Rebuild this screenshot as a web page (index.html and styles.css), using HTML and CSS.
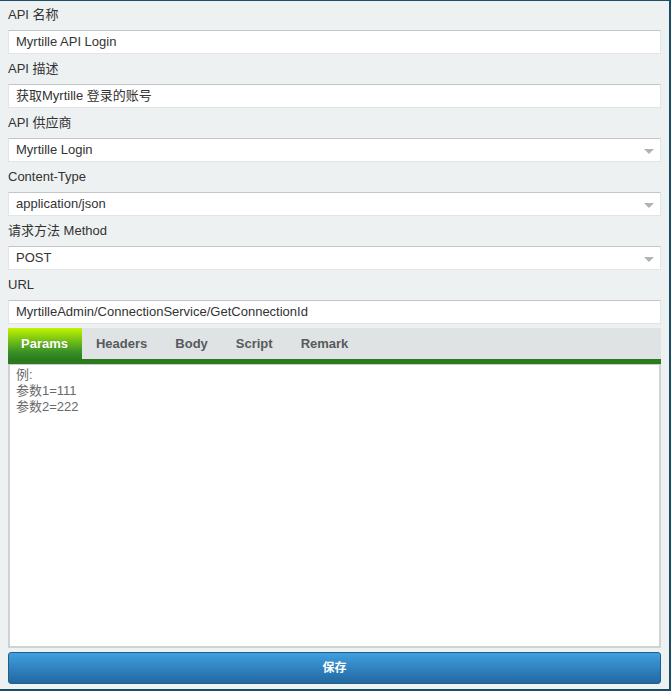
FILE: index.html
```html
<!DOCTYPE html>
<html lang="zh">
<head>
<meta charset="utf-8">
<title>API</title>
<link rel="stylesheet" href="styles.css">
</head>
<body>
<div class="page">
  <div class="field">
    <div class="label">API 名称</div>
    <div class="input">Myrtille API Login</div>
  </div>
  <div class="field">
    <div class="label">API 描述</div>
    <div class="input">获取Myrtille 登录的账号</div>
  </div>
  <div class="field">
    <div class="label">API 供应商</div>
    <div class="input select">Myrtille Login<span class="arrow"></span></div>
  </div>
  <div class="field">
    <div class="label">Content-Type</div>
    <div class="input select">application/json<span class="arrow"></span></div>
  </div>
  <div class="field">
    <div class="label">请求方法 Method</div>
    <div class="input select">POST<span class="arrow"></span></div>
  </div>
  <div class="field">
    <div class="label">URL</div>
    <div class="input">MyrtilleAdmin/ConnectionService/GetConnectionId</div>
  </div>
  <div class="tabs">
    <div class="tab active">Params</div>
    <div class="tab">Headers</div>
    <div class="tab">Body</div>
    <div class="tab">Script</div>
    <div class="tab">Remark</div>
  </div>
  <div class="textarea">例:<br>参数1=111<br>参数2=222</div>
  <div class="button">保存</div>
</div>
</body>
</html>
```
FILE: styles.css
```css
* { box-sizing: border-box; }
html, body { margin: 0; padding: 0; }
body {
  font-family: "Liberation Sans", Arial, "Noto Sans CJK SC", sans-serif;
  font-size: 13px;
  color: #333;
  background: #edf1f2;
}
.page {
  height: 691px;
  border-top: 1px solid #1b4d66;
  border-right: 2px solid #1b4d66;
  border-bottom: 2px solid #1b4d66;
  padding: 4px 8px 5px 8px;
  display: flex;
  flex-direction: column;
}
.field { display: flex; flex-direction: column; }
.field + .field { margin-top: 5px; }
.label {
  height: 20px;
  line-height: 20px;
  margin-bottom: 5px;
  color: #333;
}
.input {
  position: relative;
  height: 24px;
  line-height: 22px;
  padding: 0 7px;
  background: #fff;
  border: 1px solid #e2e4e5;
  border-top-color: #c3c5c6;
  color: #333;
  white-space: nowrap;
}
.arrow {
  position: absolute;
  right: 6px;
  top: 10px;
  width: 0;
  height: 0;
  border-left: 5px solid transparent;
  border-right: 5px solid transparent;
  border-top: 5px solid #b0b3b5;
}
.tabs {
  margin-top: 4px;
  height: 36px;
  display: flex;
  background: #dfe3e4;
  border-bottom: 5px solid #2c7a1e;
}
.tab {
  padding: 0 14px 0 13px;
  line-height: 31px;
  font-weight: bold;
  color: #575a5c;
}
.tab + .tab { padding-left: 14px; }
.tab.active {
  color: #fff;
  background: linear-gradient(#c4f200 0%, #7ec812 35%, #3a9428 75%, #2d7d1f 100%);
  text-shadow: 0 0 1px rgba(0,0,0,0.2);
}
.textarea {
  flex: 1;
  background: #fff;
  border: 2px solid #cfd2d3;
  border-top: 1px solid #c8cbcc;
  padding: 2px 6px;
  line-height: 16px;
  color: #6a6a6a;
}
.button {
  margin-top: 4px;
  height: 32px;
  line-height: 30px;
  text-align: center;
  font-size: 12px;
  font-weight: bold;
  color: #fff;
  border: 1px solid #1e5f8e;
  border-radius: 3px;
  background: linear-gradient(#419fdd, #2a78b5 70%, #2468a0);
}
```
